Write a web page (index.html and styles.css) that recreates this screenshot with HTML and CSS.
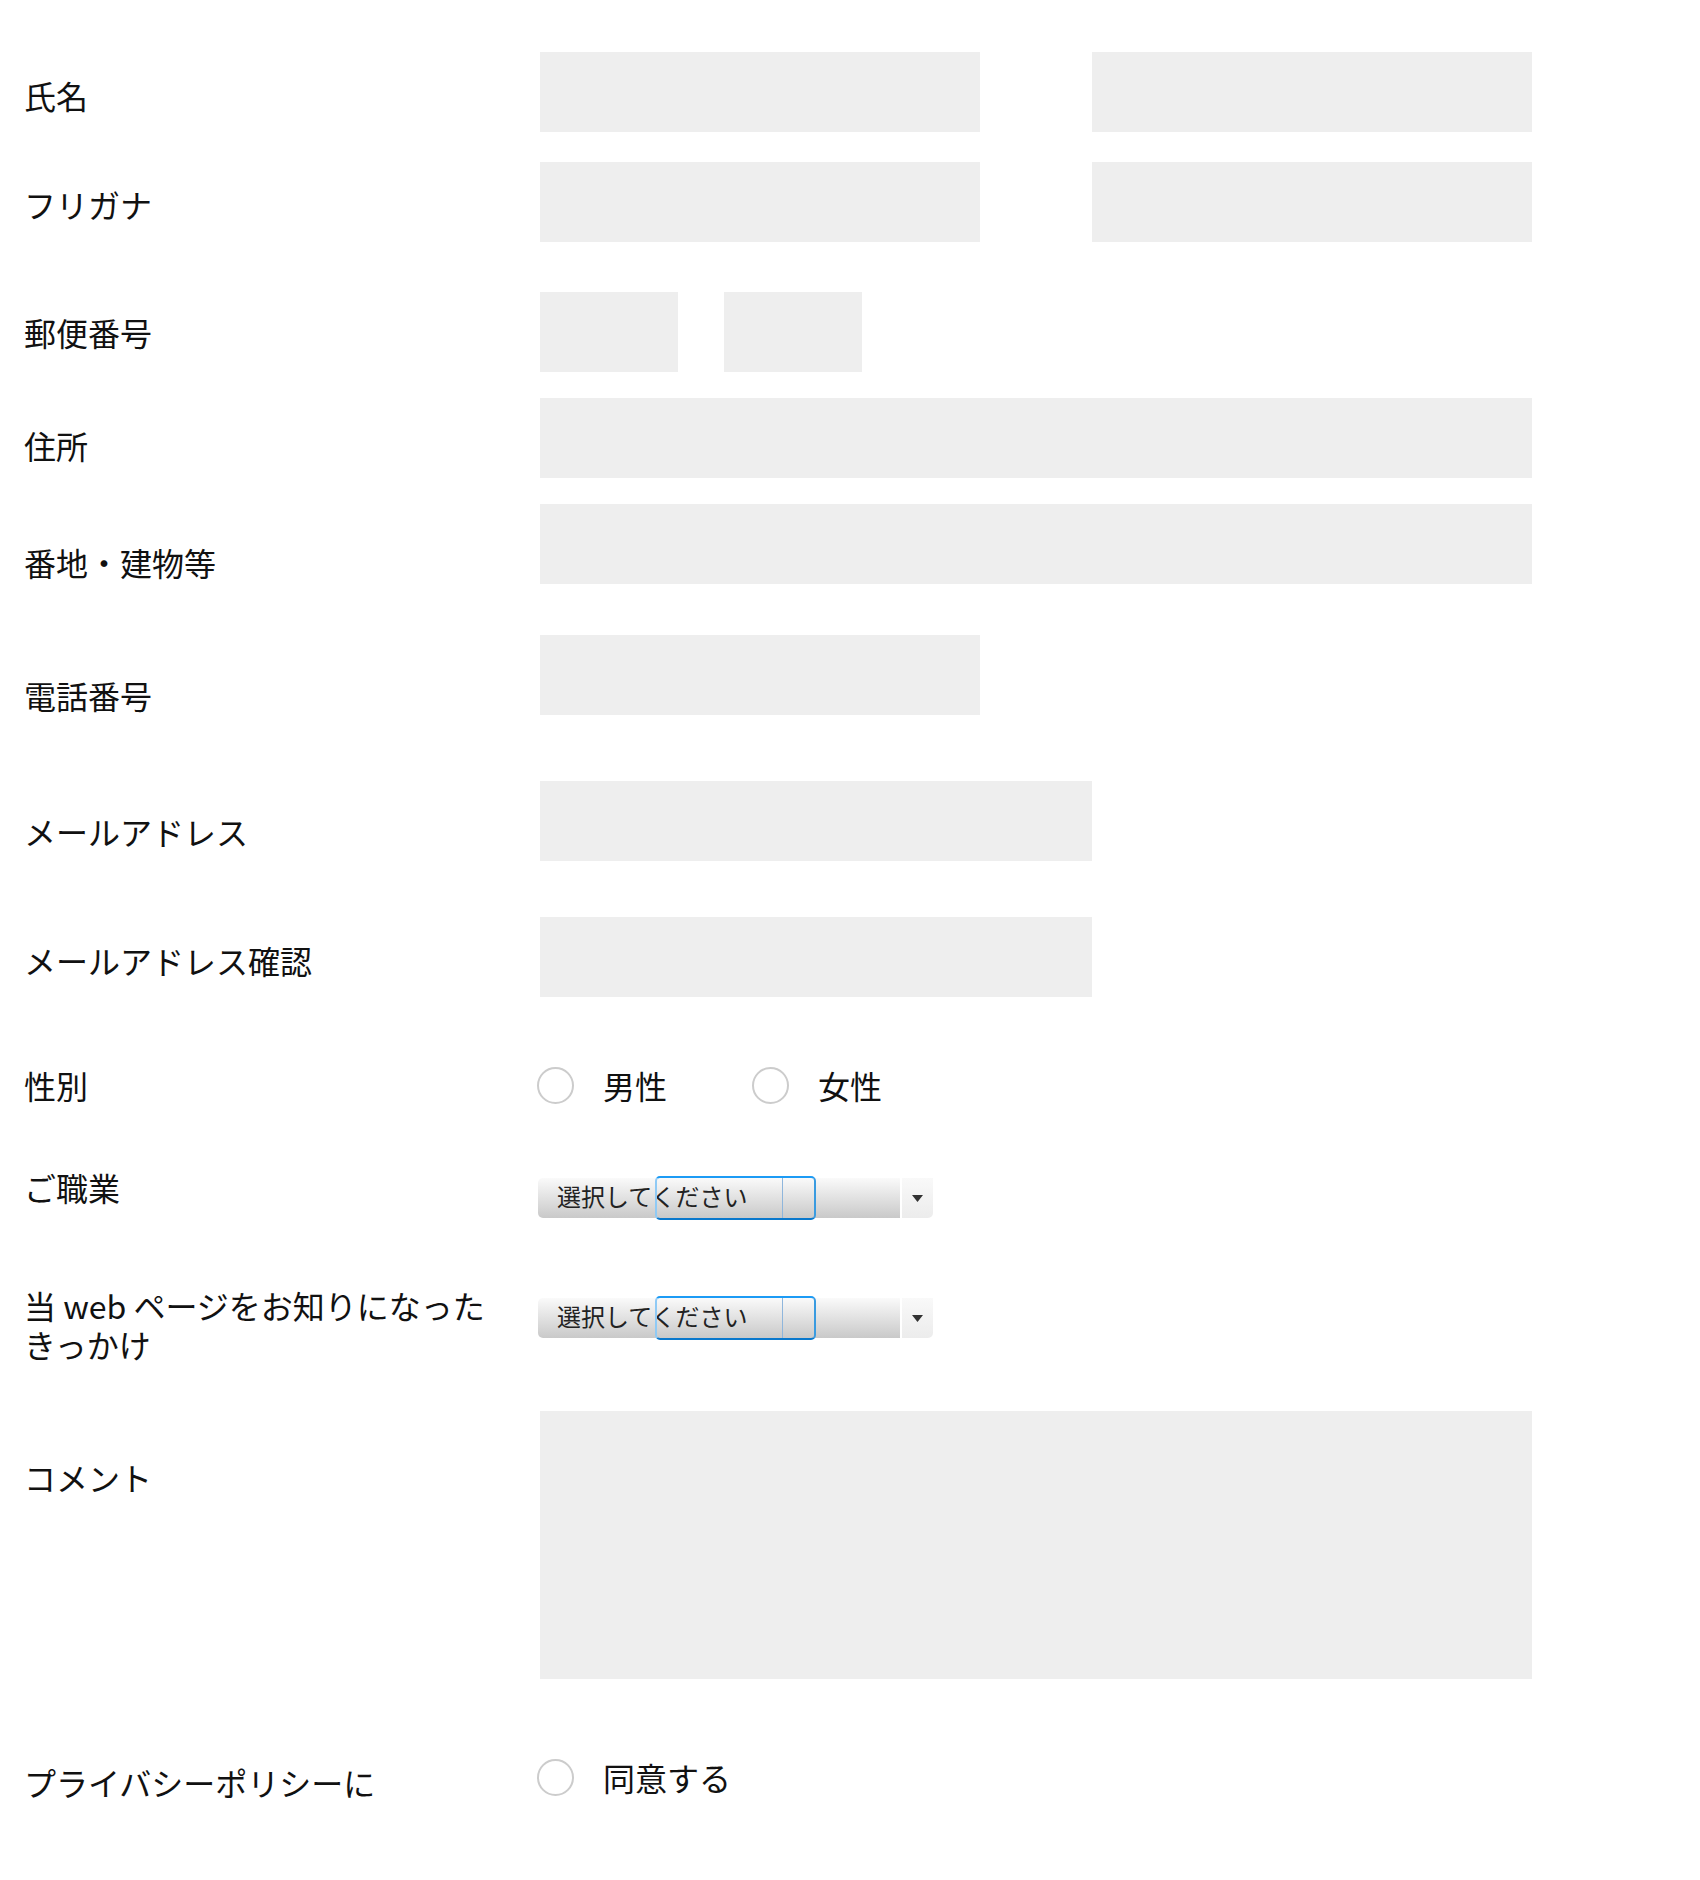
FILE: index.html
```html
<!DOCTYPE html>
<html lang="ja">
<head>
  <meta charset="UTF-8" />
  <meta name="viewport" content="width=device-width, initial-scale=1.0"/>
  <title>お問い合わせ</title>
  <link rel="stylesheet" href="styles.css">
</head>
<body>

  <form class="contact">

    <!-- 氏名 -->
    <div class="row row-name">
      <div class="row-label">氏名</div>
      <div class="row-field pair">
        <input type="text" class="text half" />
        <input type="text" class="text half" />
      </div>
    </div>

    <div class="row row-kana">
      <div class="row-label">フリガナ</div>
      <div class="row-field pair">
        <input type="text" class="text half" />
        <input type="text" class="text half" />
      </div>
    </div>

    <!-- 郵便番号 -->
    <div class="row row-zip">
      <div class="row-label">郵便番号</div>
      <div class="row-field zip">
        <input type="text" class="text short" />
        <input type="text" class="text short" />
      </div>
    </div>

    <div class="row row-addr">
      <div class="row-label">住所</div>
      <div class="row-field">
        <input type="text" class="text full" />
      </div>
    </div>

    <div class="row row-addr2">
      <div class="row-label">番地・建物等</div>
      <div class="row-field">
        <input type="text" class="text full" />
      </div>
    </div>

    <div class="row row-tel">
      <div class="row-label">電話番号</div>
      <div class="row-field">
        <input type="tel" class="text half" />
      </div>
    </div>

    <div class="row row-mail">
      <div class="row-label">メールアドレス</div>
      <div class="row-field">
        <input type="email" class="text wide" />
      </div>
    </div>

    <div class="row row-mail2">
      <div class="row-label">メールアドレス確認</div>
      <div class="row-field">
        <input type="email" class="text wide" />
      </div>
    </div>

    <!-- 性別 -->
    <div class="row row-sex">
      <div class="row-label">性別</div>
      <div class="row-field choices">
        <label class="choice"><input type="radio" name="sex" class="radio" />男性</label>
        <label class="choice"><input type="radio" name="sex" class="radio" />女性</label>
      </div>
    </div>

    <!-- セレクト -->
    <div class="row row-job">
      <div class="row-label">ご職業</div>
      <div class="row-field">
        <div class="select">
          <span class="select-box">
            <span class="select-text">選択してください</span>
            <span class="select-focus"><span class="select-split"></span></span>
          </span>
          <span class="select-arrow">
            <svg width="11" height="7" viewBox="0 0 11 7"><polygon points="0,0 11,0 5.5,7" fill="#333"/></svg>
          </span>
        </div>
      </div>
    </div>

    <div class="row row-how">
      <div class="row-label">当 web ページをお知りになったきっかけ</div>
      <div class="row-field">
        <div class="select">
          <span class="select-box">
            <span class="select-text">選択してください</span>
            <span class="select-focus"><span class="select-split"></span></span>
          </span>
          <span class="select-arrow">
            <svg width="11" height="7" viewBox="0 0 11 7"><polygon points="0,0 11,0 5.5,7" fill="#333"/></svg>
          </span>
        </div>
      </div>
    </div>

    <div class="row row-comment">
      <div class="row-label">コメント</div>
      <div class="row-field">
        <textarea class="text full comment"></textarea>
      </div>
    </div>

    <div class="row row-privacy">
      <div class="row-label">プライバシーポリシーに</div>
      <div class="row-field choices">
        <label class="choice"><input type="radio" name="agree" class="radio" />同意する</label>
      </div>
    </div>

  </form>

</body>
</html>
```

FILE: styles.css
```css
body {
  margin: 0; padding: 0; background: #fff; color: #111;
  font-family: "Noto Sans CJK JP", "Noto Sans", sans-serif;
}
.contact { padding: 0 0 80px 0; }

.row { display: flex; align-items: flex-start; }
.row-label {
  flex: 0 0 540px; box-sizing: border-box;
  padding: 0 40px 0 24px;
  font-size: 32px; line-height: 39px;
}
.row-field { display: flex; }

/* text fields */
.text {
  box-sizing: border-box; height: 80px; margin: 0;
  border: none; background: #eeeeee; padding: 0 16px;
  font-family: inherit; font-size: 24px;
}
.half { width: 440px; }
.short { width: 138px; }
.wide { width: 552px; }
.full { width: 992px; }
.pair { gap: 112px; }
.zip { gap: 46px; }
.comment { height: 268px; resize: none; padding: 16px; }

/* row spacing */
.row-name { margin-top: 52px; }
.row-name .row-label { padding-top: 24px; }
.row-kana { margin-top: 30px; }
.row-kana .row-label { padding-top: 23px; }
.row-zip { margin-top: 50px; }
.row-zip .row-label { padding-top: 21px; }
.row-addr { margin-top: 26px; }
.row-addr .row-label { padding-top: 28px; }
.row-addr2 { margin-top: 26px; }
.row-addr2 .row-label { padding-top: 39px; }
.row-tel { margin-top: 51px; }
.row-tel .row-label { padding-top: 41px; }
.row-mail { margin-top: 66px; }
.row-mail .row-label { padding-top: 31px; }
.row-mail2 { margin-top: 56px; }
.row-mail2 .row-label { padding-top: 24px; }
.row-sex { margin-top: 69px; }
.row-job { margin-top: 63px; }
.row-job .row-field { padding-top: 10px; }
.row-how { margin-top: 68px; }
.row-how .row-field { padding-top: 12px; }
.row-comment { margin-top: 47px; }
.row-comment .row-label { padding-top: 47px; }
.row-privacy { margin-top: 80px; }
.row-privacy .row-label { padding-top: 4px; }

/* radios */
.choices { align-items: center; height: 39px; margin-left: -3px; gap: 85px; }
.row-privacy .choices { height: 37px; }
.choice {
  display: flex; align-items: center; gap: 29px;
  font-size: 32px; line-height: 39px; cursor: pointer;
}
.radio {
  appearance: none; -webkit-appearance: none;
  width: 37px; height: 37px; margin: 0; box-sizing: border-box;
  border: 2px solid #cccccc; border-radius: 50%; background: #fff;
}

/* select */
.select { display: flex; margin-left: -2px; height: 40px; }
.select-box {
  position: relative; width: 362px; height: 40px; box-sizing: border-box;
  background: linear-gradient(#fafafa, #c9c9c9);
  border-radius: 5px 0 0 5px; padding: 0 0 5px 19px;
  display: flex; align-items: center;
}
.select-text { font-size: 24px; color: #222; line-height: 1; }
.select-focus {
  position: absolute; left: 117px; top: -2px;
  width: 161px; height: 44px; box-sizing: border-box;
  border: 2px solid #1c9bf5; border-bottom-color: #0a78cc;
  border-left-color: #8fcaf5; border-right-color: #3a9be0;
  border-radius: 5px;
}
.select-split {
  position: absolute; left: 125px; top: 0; bottom: 0;
  width: 1px; background: #8fb6dc;
}
.select-arrow {
  margin-left: 2px; width: 31px; height: 40px;
  background: linear-gradient(#f9f9f9, #ececec);
  border-radius: 0 0 5px 0;
  display: flex; align-items: center; justify-content: center;
}
```
